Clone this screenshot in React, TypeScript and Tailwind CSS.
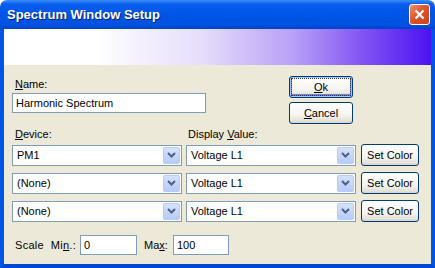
import React from "react";

const FONT = "font-['Liberation_Sans',Arial,sans-serif]";

const XpButton = ({
  children,
  wide,
  focused,
}: {
  children: React.ReactNode;
  wide: string;
  focused?: boolean;
}) => (
  <button
    className={`${wide} h-[22px] shrink-0 rounded-[3px] border border-[#003C74] bg-[linear-gradient(to_bottom,#FFFFFF_0%,#F5F4F0_60%,#E3E1D8_90%,#D6D0C5_100%)] text-[11px] text-black p-[1px] ${
      focused ? "shadow-[inset_0_0_0_1px_#A8C4F5,inset_0_-1px_0_2px_#6982EE]" : ""
    }`}
  >
    {focused ? (
      <span className="flex h-full w-full items-center justify-center border border-dotted border-[#333]">
        {children}
      </span>
    ) : (
      <span className="flex h-full w-full items-center justify-center">{children}</span>
    )}
  </button>
);

const Chevron = () => (
  <svg width="9" height="6" viewBox="0 0 9 6">
    <path d="M1 1 L4.5 4.5 L8 1" fill="none" stroke="#4D6185" strokeWidth="2" />
  </svg>
);

const Combo = ({ value }: { value: string }) => (
  <div className="flex h-[21px] w-[170px] shrink-0 items-center border border-[#7F9DB9] bg-white p-[1px]">
    <span className="flex-1 pl-[3px] text-[11px] text-black">{value}</span>
    <span className="flex h-full w-[17px] items-center justify-center rounded-[2px] border border-[#B9CBF3] bg-[linear-gradient(to_bottom,#D5E1FD,#B7CBF9)]">
      <Chevron />
    </span>
  </div>
);

const Field = ({ value, width }: { value: string; width: string }) => (
  <div className={`${width} flex h-[20px] shrink-0 items-center border border-[#7F9DB9] bg-white pl-[3px] text-[11px] text-black`}>
    {value}
  </div>
);

const rows = ["PM1", "(None)", "(None)"];

export default function App() {
  return (
    <div className={`${FONT} flex h-[268px] w-[435px] flex-col`}>
      {/* title bar */}
      <div className="flex h-[29px] shrink-0 items-center justify-between rounded-t-[7px] bg-[linear-gradient(to_bottom,#3D8EFB_0%,#0A5EEC_14%,#0056E8_45%,#0052E0_85%,#0044C6_100%)] pl-[7px] pr-[5px]">
        <span className="text-[13px] font-bold text-white [text-shadow:1px_1px_0_#0A1A80]">
          Spectrum Window Setup
        </span>
        <span className="flex h-[21px] w-[21px] items-center justify-center rounded-[3px] border border-white bg-[linear-gradient(135deg,#F09070,#E0552C_45%,#C6401A)]">
          <svg width="11" height="11" viewBox="0 0 11 11">
            <path d="M1.5 1.5 L9.5 9.5 M9.5 1.5 L1.5 9.5" stroke="white" strokeWidth="2.2" />
          </svg>
        </span>
      </div>

      {/* frame */}
      <div className="flex flex-1 flex-col border-x-4 border-b-4 border-x-[#0055E5] border-b-[#0048D0]">
        <div className="h-[36px] shrink-0 bg-[linear-gradient(to_right,#FFFFFF_21%,#E6DEFB_46%,#B89FF7_68%,#7F50F4_85%,#4C12F2_100%)]" />

        <div className="flex flex-1 flex-col bg-[#ECE9D8] pl-[8px] text-[11px] text-black">
          <div className="flex">
            <div className="flex w-[194px] flex-col">
              <span className="mt-[13px] h-[13px] pl-[3px] leading-[13px]">
                <span className="underline">N</span>ame:
              </span>
              <div className="mt-[2px]">
                <Field value="Harmonic Spectrum" width="w-[194px]" />
              </div>
            </div>
            <div className="ml-[83px] mt-[11px] flex flex-col gap-[4px]">
              <XpButton wide="w-[64px]" focused>
                <span>
                  <span className="underline">O</span>k
                </span>
              </XpButton>
              <XpButton wide="w-[64px]">
                <span>
                  <span className="underline">C</span>ancel
                </span>
              </XpButton>
            </div>
          </div>

          <div className="mt-[4px] flex h-[13px] leading-[13px]">
            <span className="w-[174px] pl-[3px]">
              <span className="underline">D</span>evice:
            </span>
            <span className="pl-[2px]">
              Display <span className="underline">V</span>alue:
            </span>
          </div>

          <div className="mt-[3px] flex flex-col gap-[6px]">
            {rows.map((r, i) => (
              <div key={i} className="flex items-center">
                <Combo value={r} />
                <div className="ml-[4px]">
                  <Combo value="Voltage L1" />
                </div>
                <div className="ml-[5px]">
                  <XpButton wide="w-[58px]">Set Color</XpButton>
                </div>
              </div>
            ))}
          </div>

          <div className="mt-[13px] flex items-center">
            <span className="w-[68px] pl-[3px] tracking-[0.3px]">
              Scale&nbsp; Mi<span className="underline">n</span>.:
            </span>
            <Field value="0" width="w-[57px]" />
            <span className="ml-[7px] w-[29px]">
              Ma<span className="underline">x</span>:
            </span>
            <Field value="100" width="w-[56px]" />
          </div>
        </div>
      </div>
    </div>
  );
}
